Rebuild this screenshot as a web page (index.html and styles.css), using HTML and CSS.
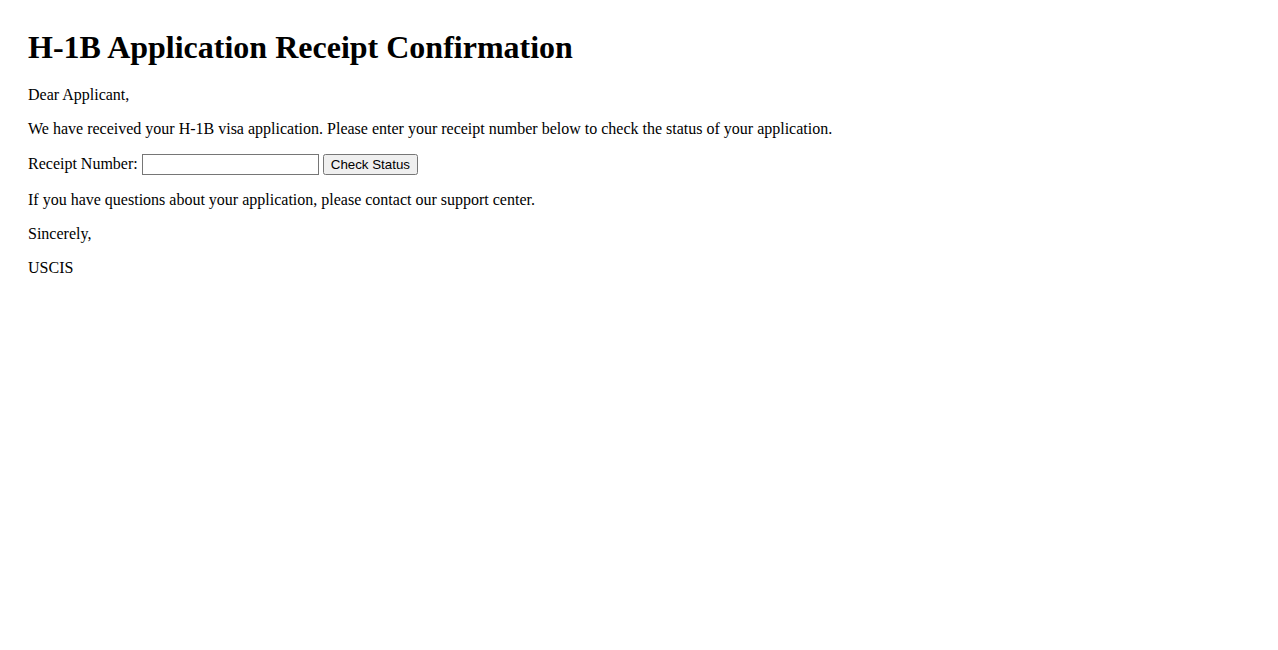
FILE: index.html
```html
<!DOCTYPE html>
<html lang="en">
<head>
    <meta charset="UTF-8">
    <meta name="viewport" content="width=device-width, initial-scale=1.0">
    <title>H-1B Application Receipt Confirmation</title>
    <link rel="stylesheet" href="styles.css">
</head>
<body>
    <h1>H-1B Application Receipt Confirmation</h1>
    <p>Dear Applicant,</p>
    <p>We have received your H-1B visa application. Please enter your receipt number below to check the status of your application.</p>
    <form class="receipt-form">
        <label for="receipt">Receipt Number:</label>
        <input type="text" id="receipt" name="receipt">
        <button type="submit">Check Status</button>
    </form>
    <p>If you have questions about your application, please contact our support center.</p>
    <p>Sincerely,</p>
    <p>USCIS</p>
</body>
</html>
```

FILE: styles.css
```css
body {
    font-family: "Liberation Serif", "Times New Roman", serif;
    margin: 8px;
    padding: 20px;
    background-color: #fff;
    color: #000;
}
h1 {
    font-size: 32px;
    margin: 1px 0 20.44px;
}
.receipt-form {
    margin: 16px 0;
}
.receipt-form input {
    box-sizing: border-box;
    width: 177px;
    height: 21px;
    padding: 1px 2px;
    border: 1px solid #767676;
    font-family: "Liberation Sans", Arial, sans-serif;
    font-size: 13.33px;
}
.receipt-form button {
    font-family: "Liberation Sans", Arial, sans-serif;
    font-size: 13.33px;
}
```
